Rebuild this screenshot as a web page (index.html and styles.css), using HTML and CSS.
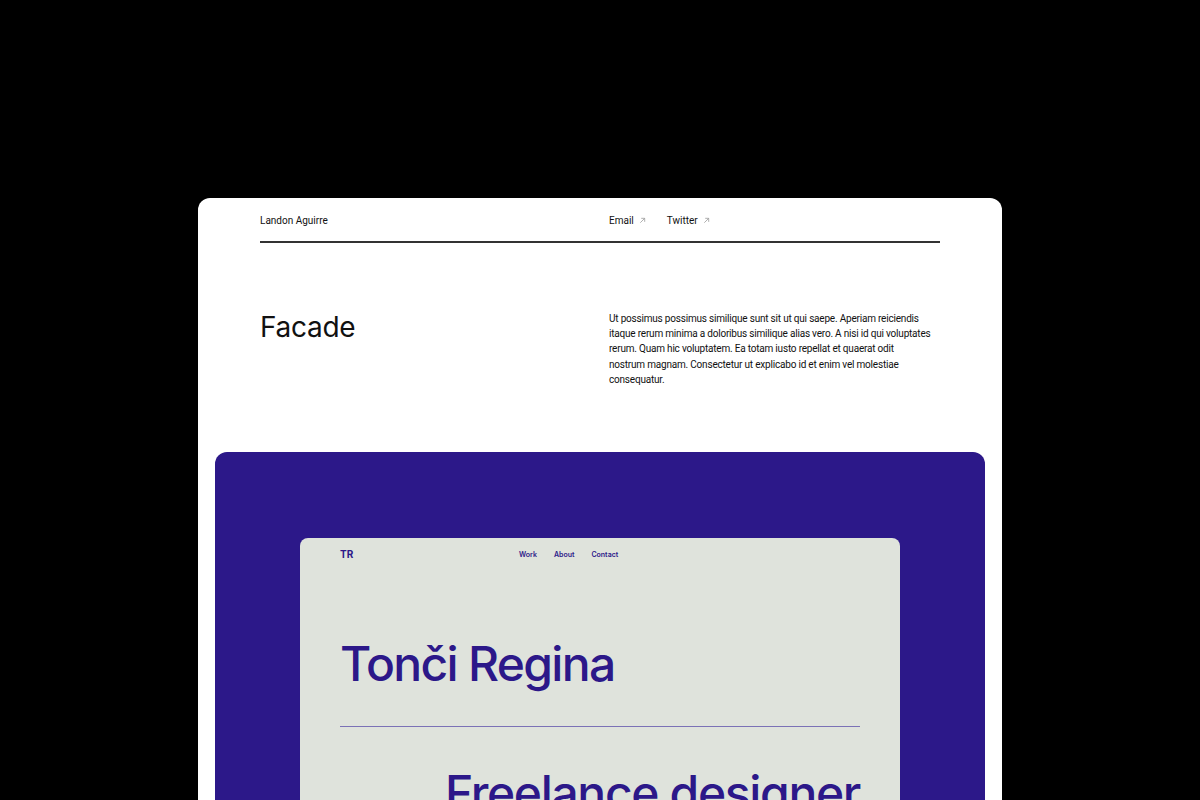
FILE: index.html
```html
<!DOCTYPE html>
<html lang="en">
<head>
<meta charset="utf-8">
<title>Facade</title>
<link rel="stylesheet" href="styles.css">
</head>
<body>
<main class="card">
  <header class="top">
    <div class="name">Landon Aguirre</div>
    <nav class="links">
      <a class="link" href="#">Email <svg class="arrow" viewBox="0 0 8 8" width="7" height="7"><path d="M1.5 6.5 L6.5 1.5 M2.5 1.5 H6.5 V5.5" fill="none" stroke="#9a9a9a" stroke-width="0.9"/></svg></a>
      <a class="link" href="#">Twitter <svg class="arrow" viewBox="0 0 8 8" width="7" height="7"><path d="M1.5 6.5 L6.5 1.5 M2.5 1.5 H6.5 V5.5" fill="none" stroke="#9a9a9a" stroke-width="0.9"/></svg></a>
    </nav>
  </header>
  <section class="intro">
    <h1 class="title">Facade</h1>
    <p class="desc">Ut possimus possimus similique sunt sit ut qui saepe. Aperiam reiciendis itaque rerum minima a doloribus similique alias vero. A nisi id qui voluptates rerum. Quam hic voluptatem. Ea totam iusto repellat et quaerat odit<br>nostrum magnam. Consectetur ut explicabo id et enim vel molestiae consequatur.</p>
  </section>
  <section class="showcase">
    <div class="preview">
      <div class="pnav">
        <div class="logo">TR</div>
        <nav class="pmenu">
          <a href="#">Work</a>
          <a href="#">About</a>
          <a href="#">Contact</a>
        </nav>
      </div>
      <h2 class="hero">Tonči Regina</h2>
      <div class="rule"></div>
      <p class="role">Freelance designer</p>
    </div>
  </section>
</main>
</body>
</html>
```
FILE: styles.css
```css
html, body {
  margin: 0;
  padding: 0;
  background: #000;
  height: 100%;
  overflow: hidden;
}
body {
  padding-top: 198px;
  font-family: Inter, "Noto Sans", sans-serif;
  box-sizing: border-box;
}
.card {
  width: 804px;
  margin: 0 auto;
  background: #fff;
  border-radius: 12px;
  padding-bottom: 200px;
}
.top {
  margin: 0 62px;
  height: 45px;
  padding-top: 2px;
  box-sizing: border-box;
  border-bottom: 2px solid #333;
  display: grid;
  grid-template-columns: 1fr 1fr;
  column-gap: 18px;
  align-items: center;
  font-family: Roboto, "Liberation Sans", sans-serif;
  font-size: 10px;
  color: #111;
}
.links {
  display: flex;
  gap: 21px;
}
.link {
  color: #111;
  text-decoration: none;
  display: inline-flex;
  align-items: center;
  gap: 2px;
}
.arrow {
  margin-left: 3px;
  margin-top: -1px;
}
.intro {
  margin: 0 62px;
  padding: 68px 0 65px;
  display: grid;
  grid-template-columns: 1fr 1fr;
  column-gap: 18px;
  align-items: start;
}
.title {
  margin: 0;
  font-size: 28px;
  line-height: 1.2;
  font-weight: 400;
  color: #111;
  letter-spacing: -0.01em;
}
.desc {
  margin: 0;
  font-family: Roboto, "Liberation Sans", sans-serif;
  font-size: 10px;
  line-height: 15.2px;
  color: #111;
  letter-spacing: -0.02em;
}
.showcase {
  width: 770px;
  margin: 0 auto;
  background: #2c1889;
  border-radius: 12px;
  padding-top: 86px;
  padding-bottom: 200px;
}
.preview {
  width: 600px;
  margin: 0 auto;
  background: #dfe3dc;
  border-radius: 8px;
  padding: 0 40px 100px;
  box-sizing: border-box;
  color: #2c1889;
}
.pnav {
  height: 32px;
  display: flex;
  align-items: center;
}
.logo {
  width: 179px;
  font-size: 10px;
  font-weight: 700;
}
.pmenu {
  display: flex;
  gap: 17px;
}
.pmenu a {
  font-size: 7px;
  font-weight: 600;
  color: #2c1889;
  text-decoration: none;
}
.hero {
  margin: 65px 0 0;
  font-size: 48px;
  line-height: 1.2;
  font-weight: 500;
  letter-spacing: -0.035em;
}
.rule {
  margin-top: 33px;
  height: 1px;
  background: #7b72b6;
}
.role {
  margin: 37px 0 0;
  font-size: 48px;
  line-height: 1.2;
  font-weight: 500;
  letter-spacing: -0.028em;
  text-align: right;
}
```
